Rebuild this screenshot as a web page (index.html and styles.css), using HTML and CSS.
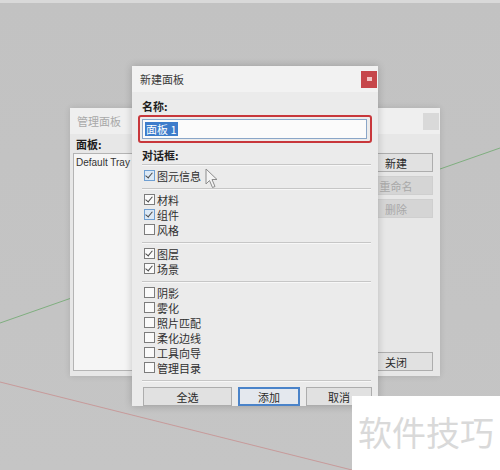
FILE: index.html
```html
<!DOCTYPE html>
<html lang="zh-CN">
<head>
<meta charset="utf-8">
<title>新建面板</title>
<link rel="stylesheet" href="styles.css">
</head>
<body>
<div class="desktop">
  <div class="top-strip"></div>

  <!-- model axes behind the windows -->
  <svg class="axes" width="500" height="470" viewBox="0 0 500 470">
    <line x1="0" y1="323" x2="500" y2="148" stroke="#7fae7f" stroke-width="1"/>
    <line x1="0" y1="382" x2="360" y2="472" stroke="#c79a9a" stroke-width="1"/>
  </svg>

  <!-- 管理面板 window -->
  <div class="win win-manage">
    <div class="titlebar titlebar-dim">
      <span class="title">管理面板</span>
      <span class="close-dim"></span>
    </div>
    <div class="manage-body">
      <div class="manage-left">
        <div class="label-bold">面板:</div>
        <div class="listbox"><div class="list-item">Default Tray</div></div>
      </div>
      <div class="manage-right">
        <div class="side-btns">
          <div class="btn side-btn">新建</div>
          <div class="btn side-btn disabled">重命名</div>
          <div class="btn side-btn disabled">删除</div>
        </div>
        <div class="btn side-btn">关闭</div>
      </div>
    </div>
  </div>

  <!-- 新建面板 window -->
  <div class="win win-new">
    <div class="titlebar">
      <span class="title">新建面板</span>
      <span class="close-red"><span class="close-mark"></span></span>
    </div>
    <div class="new-body">
      <div class="label-bold name-label">名称:</div>
      <div class="field-ring">
        <div class="field"><span class="sel">面板 1</span></div>
      </div>
      <div class="label-bold dlg-label">对话框:</div>

      <div class="sep"></div>
      <div class="group">
        <div class="row"><span class="cb on hot"></span>图元信息</div>
      </div>
      <div class="sep"></div>
      <div class="group">
        <div class="row"><span class="cb on"></span>材料</div>
        <div class="row"><span class="cb on hot"></span>组件</div>
        <div class="row"><span class="cb"></span>风格</div>
      </div>
      <div class="sep"></div>
      <div class="group">
        <div class="row"><span class="cb on"></span>图层</div>
        <div class="row"><span class="cb on"></span>场景</div>
      </div>
      <div class="sep"></div>
      <div class="group">
        <div class="row"><span class="cb"></span>阴影</div>
        <div class="row"><span class="cb"></span>雾化</div>
        <div class="row"><span class="cb"></span>照片匹配</div>
        <div class="row"><span class="cb"></span>柔化边线</div>
        <div class="row"><span class="cb"></span>工具向导</div>
        <div class="row"><span class="cb"></span>管理目录</div>
      </div>
      <div class="sep"></div>

      <div class="btn-row">
        <div class="btn b-all">全选</div>
        <div class="btn b-add">添加</div>
        <div class="btn b-cancel">取消</div>
      </div>
    </div>
  </div>

  <!-- mouse pointer -->
  <svg class="pointer" width="14" height="21" viewBox="0 0 14 21">
    <path d="M1 1 L1 16 L4.5 12.5 L7.5 19.5 L10 18.5 L7 11.5 L12 11.5 Z" fill="#f4f4f4" stroke="#8c8c8c" stroke-width="1" stroke-linejoin="round"/>
  </svg>

  <div class="stamp">软件技巧</div>
</div>
</body>
</html>
```
FILE: styles.css
```css
* { box-sizing: border-box; }

html, body {
  margin: 0;
  padding: 0;
}

body {
  width: 500px;
  height: 470px;
  overflow: hidden;
  font-family: "Noto Sans CJK SC", "Noto Sans", sans-serif;
  font-size: 11px;
  color: #2a2a2a;
}

.desktop {
  position: relative;
  width: 500px;
  height: 470px;
  background: linear-gradient(#c2c2c2, #c5c5c5);
}

.top-strip {
  height: 3px;
  background: #d9d9d9;
}

.axes {
  position: absolute;
  left: 0;
  top: 0;
}

/* ---------- windows ---------- */
.win {
  position: absolute;
  display: flex;
  flex-direction: column;
}

.titlebar {
  height: 26px;
  flex: none;
  display: flex;
  align-items: center;
  justify-content: space-between;
  background: #f2f2f2;
  padding: 0 1px 0 8px;
}

.title {
  line-height: 14px;
  color: #3a3a3a;
}

.label-bold {
  font-weight: 700;
  line-height: 14px;
  color: #1e1e1e;
}

.btn {
  display: flex;
  align-items: center;
  justify-content: center;
  height: 19px;
  background: #e1e1e1;
  border: 1px solid #adadad;
  line-height: 14px;
  color: #2a2a2a;
}

/* ---------- 管理面板 ---------- */
.win-manage {
  left: 70px;
  top: 108px;
  width: 370px;
  height: 268px;
  background: #e7e7e7;
  box-shadow: 0 0 6px rgba(0, 0, 0, 0.12);
}

.titlebar-dim {
  background: #efefef;
  padding: 0 1px 0 7px;
}

.titlebar-dim .title {
  color: #a9a9a9;
}

.close-dim {
  width: 16px;
  height: 17px;
  background: #d9d9d9;
}

.manage-body {
  flex: 1;
  display: flex;
  justify-content: space-between;
  padding: 2px 7px 5px 3px;
}

.manage-left {
  display: flex;
  flex-direction: column;
}

.manage-left .label-bold {
  padding-left: 3px;
  margin-top: 1px;
}

.listbox {
  margin-top: 2px;
  width: 110px;
  flex: 1;
  background: #f5f5f5;
  border: 1px solid #b4b4b4;
  padding: 2px 2px;
}

.list-item {
  font-family: "Liberation Sans", Arial, sans-serif;
  font-size: 10px;
  line-height: 14px;
  color: #333;
}

.manage-right {
  display: flex;
  flex-direction: column;
  justify-content: space-between;
  padding-top: 17px;
}

.side-btns {
  display: flex;
  flex-direction: column;
  gap: 4px;
}

.side-btn {
  width: 74px;
}

.side-btn.disabled {
  background: #d5d5d5;
  border-color: #cfcfcf;
  color: #a8a8a8;
}

/* ---------- 新建面板 ---------- */
.win-new {
  left: 132px;
  top: 66px;
  width: 246px;
  height: 340px;
  background: #ebebeb;
  box-shadow: 0 0 8px rgba(0, 0, 0, 0.2);
}

.close-red {
  width: 16px;
  height: 17px;
  background: #c6464a;
  display: flex;
  align-items: center;
  justify-content: center;
}

.close-mark {
  width: 5px;
  height: 4px;
  background: #f3c4c4;
}

.new-body {
  flex: 1;
  display: flex;
  flex-direction: column;
  padding: 7px 6px 0 6px;
}

.name-label {
  padding-left: 4px;
}

.field-ring {
  margin-top: 2px;
  height: 28px;
  border: 2px solid #c8373b;
  border-radius: 3px;
  padding: 2px 3px 2px 2px;
  background: #ececec;
}

.field {
  height: 100%;
  background: #fbfbfb;
  border: 1px solid #8aa6c8;
  display: flex;
  align-items: center;
  padding-left: 2px;
}

.sel {
  background: #3d7ccb;
  color: #fff;
  line-height: 14px;
  padding: 0 1px;
}

.dlg-label {
  margin-top: 5px;
  padding-left: 4px;
}

.sep {
  margin: 2px 1px 0 4px;
  height: 2px;
  border-top: 1px solid #c6c6c6;
  border-bottom: 1px solid #f7f7f7;
}

.group {
  padding: 2px 0 3px 6px;
  display: flex;
  flex-direction: column;
}

.row {
  height: 15px;
  display: flex;
  align-items: center;
  gap: 2px;
  line-height: 14px;
  color: #2f2f2f;
}

.cb {
  position: relative;
  width: 11px;
  height: 11px;
  flex: none;
  border: 1px solid #7c7c7c;
  background: #fafafa;
}

.cb.hot {
  border-color: #6f9fd2;
  background: #dce9f6;
}

/* tick inside a checked box */
.cb.on::after {
  content: "";
  position: absolute;
  left: 2px;
  top: 0px;
  width: 3px;
  height: 6px;
  border-right: 1.5px solid #4a4a4a;
  border-bottom: 1.5px solid #4a4a4a;
  transform: rotate(40deg);
}

.btn-row {
  margin-top: 5px;
  display: flex;
  gap: 6px;
  padding-left: 5px;
}

.b-all { width: 89px; }

.b-add {
  width: 62px;
  border: 2px solid #4a83c9;
  background: #e4e8ee;
}

.b-cancel { width: 66px; }

/* ---------- overlay bits ---------- */
.pointer {
  position: absolute;
  left: 205px;
  top: 168px;
}

.stamp {
  position: absolute;
  left: 352px;
  top: 396px;
  width: 148px;
  height: 74px;
  background: #ffffff;
  color: #d9d9d9;
  font-size: 34px;
  line-height: 40px;
  padding: 16px 0 0 6px;
  white-space: nowrap;
}
```
